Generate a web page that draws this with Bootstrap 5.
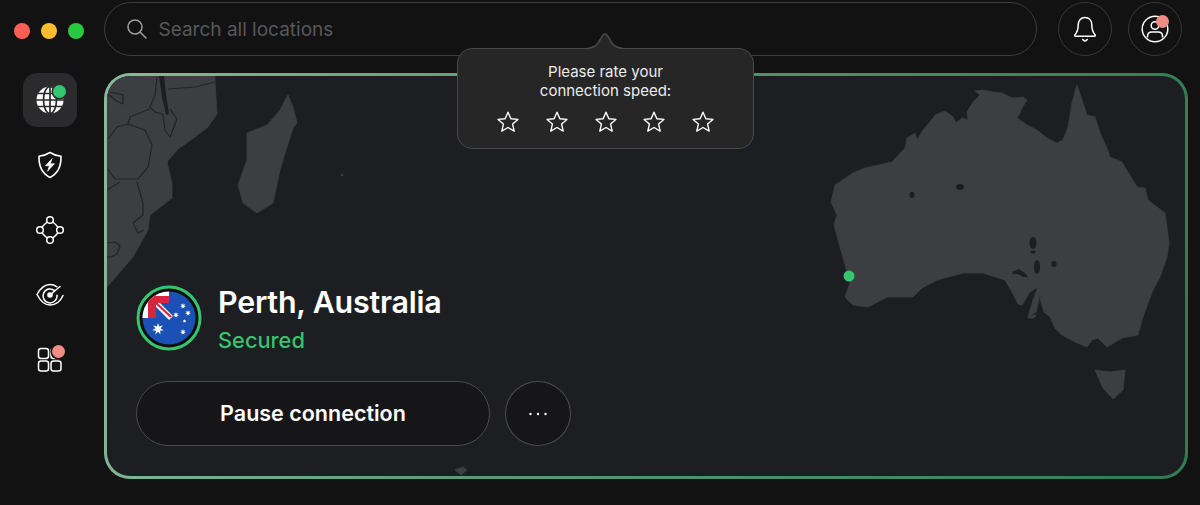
<!DOCTYPE html>
<html lang="en">
<head>
    <meta charset="UTF-8">
    <meta name="viewport" content="width=device-width, initial-scale=1.0">
    <title>VPN - Perth, Australia</title>
    <link href="https://cdn.jsdelivr.net/npm/bootstrap@5.3.0/dist/css/bootstrap.min.css" rel="stylesheet">
    <script src="https://cdn.jsdelivr.net/npm/bootstrap@5.3.0/dist/js/bootstrap.bundle.min.js"></script>
    <style>
        html, body { height: 505px; overflow: hidden; }
        body { background: #121213; font-family: Inter, "Liberation Sans", sans-serif; color: #fff; position: relative; }
        .top-row { height: 56px; padding-top: 2px; }
        .lights { width: 104px; padding-left: 14px; padding-top: 4px; gap: 11px; }
        .light { width: 16px; height: 16px; border-radius: 50%; }
        .search-box { width: 933px; height: 54px; border: 1.5px solid #3c3c3d; border-radius: 27px; padding-left: 20px; gap: 9.5px; }
        .search-text { font-size: 19px; color: #585859; padding-top: 3px; }
        .round-btn { width: 54px; height: 54px; border: 1.5px solid #38383a; border-radius: 50%; position: relative; }
        .bell-btn { margin-left: 21px; }
        .user-btn { margin-left: 16px; }
        .main-row { margin-top: 17px; }
        .side-rail { width: 104px; padding-left: 23px; gap: 11px; }
        .rail-item { width: 54px; height: 54px; border-radius: 14px; position: relative; }
        .rail-active { background: #2b2b2d; }
        .pip { position: absolute; width: 13px; height: 13px; border-radius: 50%; }
        .pip-green { background: #35c46f; top: 12px; right: 12px; }
        .pip-rose { background: #f28b82; top: 12px; right: 12px; }
        .map-panel { width: 1084px; height: 406px; border: 3px solid transparent; border-radius: 26px; position: relative; overflow: hidden;
            background: linear-gradient(#1d1e21, #1d1e21) padding-box, linear-gradient(100deg, #86bb9b 0%, #5f9c78 35%, #2f7d52 100%) border-box;
            padding: 0 0 30px 29px; }
        .map-art { position: absolute; left: -2px; top: -2px; width: 1082px; height: 405px; }
        .map-pin { position: absolute; left: 736px; top: 194px; }
        .place-row { position: relative; gap: 16px; margin-bottom: 27px; }
        .place-text { padding-top: 2px; }
        .place-name { font-size: 30.4px; font-weight: 600; line-height: 36px; letter-spacing: -0.2px; }
        .place-state { font-size: 21.8px; font-weight: 500; color: #35c46f; line-height: 28px; margin-top: 6px; }
        .action-row { position: relative; gap: 15px; }
        .btn.pause-btn { width: 354px; height: 65px; border-radius: 33px; background: #161618; border: 1.5px solid #4c4c4e; color: #fff; font-size: 21.5px; font-weight: 600; }
        .btn.more-btn { width: 66px; height: 65px; border-radius: 50%; background: #161618; border: 1.5px solid #4c4c4e; color: #fff; padding: 0; }
        .rate-pop { position: absolute; left: 457px; top: 48px; width: 297px; height: 101px; background: #262626; border: 1.5px solid #494949; border-radius: 15px; z-index: 5; text-align: center; padding-top: 13px; }
        .rate-tip { position: absolute; left: 129px; top: -18px; width: 36px; height: 19px; }
        .rate-text { font-size: 15px; line-height: 19px; color: #ececec; }
        .rate-stars { gap: 24.7px; margin-top: 10px; }
    </style>
</head>
<body>
    <svg width="0" height="0" class="d-block">
        <defs>
            <polygon id="aus-star" points="0,-1 .195,-.405 .78,-.62 .44,-.1 .97,.22 .35,.28 .43,.9 0,.45 -.43,.9 -.35,.28 -.97,.22 -.44,-.1 -.78,-.62 -.195,-.405"/>
            <path id="rate-star" d="M12 2.200l2.900 6.500 7 .7-5.300 4.700 1.600 7-6.200-3.600-6.200 3.600 1.600-7L2.100 9.400l7-.7z" fill="none" stroke="#fff" stroke-width="1.400" stroke-linejoin="round"/>
        </defs>
    </svg>

    <div class="d-flex top-row">
        <div class="d-flex align-items-center lights">
            <span class="light" style="background:#ff5f57"></span>
            <span class="light" style="background:#febc2e"></span>
            <span class="light" style="background:#28c840"></span>
        </div>
        <div class="d-flex align-items-center search-box">
            <svg width="24" height="24" viewBox="0 0 24 24" fill="none" stroke="#a0a0a0" stroke-width="1.500" stroke-linecap="round"><circle cx="10" cy="10" r="7"/><path d="M15.200 15.200L21 21"/></svg>
            <span class="search-text">Search all locations</span>
        </div>
        <div class="round-btn bell-btn d-flex align-items-center justify-content-center">
            <svg width="26" height="28" viewBox="0 0 26 28" fill="none" stroke="#fff" stroke-width="1.500" stroke-linejoin="round" stroke-linecap="round"><path d="M13 2.500c-4.400 0-6.800 3.300-6.800 7.400 0 5.200-1 7.300-3.400 10 -.4.600-.1 1.300.7 1.300h19c.8 0 1.100-.7.7-1.300-2.400-2.700-3.400-4.800-3.400-10 0-4.100-2.400-7.400-6.800-7.400z"/><path d="M10.800 24.500c.6 1 1.300 1.400 2.200 1.400s1.600-.4 2.200-1.400"/></svg>
        </div>
        <div class="round-btn user-btn d-flex align-items-center justify-content-center">
            <svg width="28" height="28" viewBox="0 0 28 28" fill="none" stroke="#fff" stroke-width="1.500"><circle cx="14" cy="14" r="12.800"/><circle cx="14" cy="10.500" r="3.800"/><path d="M6.500 22.500v-1.500c0-2.500 2-4 4.500-4h6c2.500 0 4.500 1.500 4.500 4v1.500"/></svg>
            <span class="pip pip-rose"></span>
        </div>
    </div>

    <div class="d-flex main-row">
        <div class="d-flex flex-column side-rail">
            <div class="rail-item rail-active d-flex align-items-center justify-content-center">
                <svg width="28" height="28" viewBox="0 0 28 28"><circle cx="14" cy="14" r="13.500" fill="#fff"/><g fill="none" stroke="#2b2b2d" stroke-width="1.700"><ellipse cx="14" cy="14" rx="6.500" ry="13.500"/><path d="M14 0v28M0 14h28M2 7.500h24M2 20.500h24"/></g></svg>
                <span class="pip pip-green" style="top:12px;right:11px;box-shadow:0 0 0 1.500px #2b2b2d"></span>
            </div>
            <div class="rail-item d-flex align-items-center justify-content-center">
                <svg width="26" height="28" viewBox="0 0 26 28" fill="none" stroke="#fff" stroke-width="1.600" stroke-linejoin="round"><path d="M13 1.500c3 2 6.500 3.200 11 3.800.3 9.800-2.700 17-11 21.200C4.700 22.300 1.700 15.100 2 5.300c4.500-.6 8-1.800 11-3.800z"/><path d="M15.200 7.500L8.500 14.800h4l-2 5.500 7-7.600h-4.200z" fill="#fff" stroke-width=".6"/></svg>
            </div>
            <div class="rail-item d-flex align-items-center justify-content-center">
                <svg width="28" height="28" viewBox="0 0 28 28" fill="none" stroke="#fff" stroke-width="1.500"><circle cx="14" cy="4" r="3.300"/><circle cx="14" cy="24" r="3.300"/><circle cx="4" cy="14" r="3.300"/><circle cx="24" cy="14" r="3.300"/><path d="M16.700 6c1.800 1.300 3.800 3.300 5.300 5.300M11.300 6C9.500 7.300 7.500 9.300 6 11.300M16.700 22c1.800-1.300 3.800-3.300 5.300-5.300M11.300 22c-1.800-1.300-3.800-3.300-5.300-5.300"/></svg>
            </div>
            <div class="rail-item d-flex align-items-center justify-content-center">
                <svg width="28" height="24" viewBox="0 0 28 24" fill="none" stroke="#fff" stroke-width="1.500" stroke-linecap="round"><path d="M21 3.800C18.800 2.300 16.600 1.500 14 1.500 8.500 1.500 4 6 1 11.500c3 5.700 7.500 10.500 13 10.500 5.800 0 10.500-3.800 13-9.500"/><path d="M18.600 7.600A7 7 0 1 0 21 12.200"/><circle cx="14" cy="12" r="2.800" fill="#fff" stroke="none"/><path d="M14 12l10-8.500"/></svg>
            </div>
            <div class="rail-item d-flex align-items-center justify-content-center">
                <svg width="26" height="26" viewBox="0 0 26 26" fill="none" stroke="#fff" stroke-width="1.500"><rect x="1.500" y="1.500" width="10" height="10" rx="2.500"/><rect x="14" y="1.500" width="10" height="10" rx="2.500"/><rect x="1.500" y="14" width="10" height="10" rx="2.500"/><rect x="14" y="14" width="10" height="10" rx="2.500"/></svg>
                <span class="pip pip-rose" style="top:12px;right:12px;box-shadow:0 0 0 1.500px #121213"></span>
            </div>
        </div>

        <div class="map-panel d-flex flex-column justify-content-end">
            <svg class="map-art" viewBox="105 74 1082 405">
                <g fill="#3d3e42" stroke="#3d3e42" stroke-width=".8" stroke-linejoin="round">
                    <path d="M105 70H215L215 82 217 114 208 127 195 137 178 149 167 162 172 183 172 198 150 215 148 230 133 257 107 287 105 290z"/>
                    <path d="M288 95L293 107 297 123 293 128 287 147 280 170 273 203 257 213 243 203 238 185 247 160 247 133 267 125 280 110z"/>
                    <path d="M835 185L853 173 865 168 892 162 905 148 907 138 915 133 917 140 923 130 930 122 935 115 945 111 953 117 956 123 962 118 968 120 967 112 973 102 980 95 975 91 983 90 993 92 1002 93 1012 98 1023 97 1027 100 1022 108 1020 113 1017 118 1027 125 1037 130 1047 138 1057 143 1063 140 1068 127 1072 103 1077 85 1082 100 1087 115 1095 117 1100 133 1107 148 1110 157 1122 162 1128 172 1137 187 1145 188 1148 200 1165 213 1167 227 1169 243 1167 257 1160 277 1153 290 1148 303 1142 320 1138 335 1122 338 1107 347 1098 338 1092 340 1087 347 1075 342 1062 335 1055 328 1050 317 1044 312 1041 302 1040 295 1036 312 1028 317 1033 300 1038 287 1030 292 1022 305 1018 304 1012 292 1005 280 983 273 963 273 937 280 922 288 913 297 887 297 868 307 853 305 845 297 850 283 840 247 834 225 837 215 831 202z"/>
                    <path d="M1095 370L1110 372 1125 370 1123 390 1113 399 1103 388z"/>
                    <path d="M1028 316l8-1-2 3-6 0zM455 470l8-3 4 3-6 5z"/>
                    <circle cx="342" cy="175" r="1"/>
                </g>
                <g fill="#1d1e21">
                    <ellipse cx="912" cy="195" rx="2.500" ry="3"/>
                    <ellipse cx="960" cy="187" rx="4" ry="3"/>
                    <ellipse cx="1033" cy="243" rx="3.500" ry="6"/>
                    <ellipse cx="1033" cy="252" rx="2.500" ry="1.500"/>
                    <ellipse cx="1037" cy="267" rx="3" ry="7"/>
                    <ellipse cx="1054" cy="264" rx="2.500" ry="3"/>
                    <path d="M1012 272l7-3 6 4 3 4-5 0-5-3-5 0z"/>
                </g>
                <g fill="none" stroke="#232427" stroke-width="1.200" stroke-linejoin="round">
                    <path d="M110 92l13 3 0 9-8-4-7-6"/>
                    <path d="M215 82l-20 5-27 2"/>
                    <path d="M157 77l-2 18-5 12 5 5 8 2"/>
                    <path d="M150 109l-20 8-2 7 17 6 7 15-4 22-10 12-23 0-7-10"/>
                    <path d="M128 124l-11 3-9 12"/>
                    <path d="M107 190l13-8M137 182l6 21 0 12-10 8 5 10 6-3"/>
                    <path d="M163 114l2 16 5 7 7-18-7-10"/>
                    <path d="M108 243l7-1 5 4-3 8-6 3-4 0"/>
                </g>
                <path d="M159 76h5l2 18 3 20-3 1-4-18z" fill="#1d1e21"/>
            </svg>
            <svg class="map-pin" width="12" height="12" viewBox="0 0 12 12"><circle cx="6" cy="6" r="5.500" fill="#35c46f"/></svg>

            <div class="d-flex align-items-center place-row">
                <svg width="66" height="66" viewBox="0 0 66 66">
                    <defs><clipPath id="flag-clip"><circle cx="33" cy="33" r="26.500"/></clipPath></defs>
                    <circle cx="33" cy="33" r="31" fill="#0f0f10" stroke="#35c46f" stroke-width="3"/>
                    <g clip-path="url(#flag-clip)">
                        <rect width="66" height="66" fill="#1b50b4"/>
                        <rect x="4" y="4" width="29" height="29" fill="#fff"/>
                        <rect x="20" y="18" width="13" height="15" fill="#1b50b4"/>
                        <path d="M19 17L35 33" stroke="#fff" stroke-width="5.500"/>
                        <path d="M19 17L35 32" stroke="#d8243c" stroke-width="2.200"/>
                        <path d="M4 11H33V18H4zM12 4H20V33H12z" fill="#d8243c"/>
                    </g>
                    <g fill="#fff">
                        <use href="#aus-star" transform="translate(22 44) scale(6)"/>
                        <use href="#aus-star" transform="translate(47 21) scale(3)"/>
                        <use href="#aus-star" transform="translate(40 30) scale(3)"/>
                        <use href="#aus-star" transform="translate(52 28) scale(3)"/>
                        <use href="#aus-star" transform="translate(48.500 36) scale(2)"/>
                        <use href="#aus-star" transform="translate(47 47) scale(3)"/>
                    </g>
                </svg>
                <div class="place-text">
                    <div class="place-name">Perth, Australia</div>
                    <div class="place-state">Secured</div>
                </div>
            </div>

            <div class="d-flex action-row">
                <button type="button" class="btn pause-btn">Pause connection</button>
                <button type="button" class="btn more-btn d-flex align-items-center justify-content-center">
                    <svg width="20" height="4" viewBox="0 0 20 4" fill="#fff"><circle cx="2.500" cy="2" r="1.200"/><circle cx="10" cy="2" r="1.200"/><circle cx="17.500" cy="2" r="1.200"/></svg>
                </button>
            </div>
        </div>
    </div>

    <div class="rate-pop">
        <svg class="rate-tip" viewBox="0 0 36 19"><path d="M0 17.500C6 17 9 15 11 12L16 4C17 2.500 19 2.500 20 4L25 12C27 15 30 17 36 17.500V19H0z" fill="#262626"/><path d="M0 17.500C6 17 9 15 11 12L16 4C17 2.500 19 2.500 20 4L25 12C27 15 30 17 36 17.500" fill="none" stroke="#494949" stroke-width="1.500"/></svg>
        <div class="rate-text">Please rate your<br>connection speed:</div>
        <div class="d-flex justify-content-center rate-stars">
            <svg width="24" height="24" viewBox="0 0 24 24"><use href="#rate-star"/></svg>
            <svg width="24" height="24" viewBox="0 0 24 24"><use href="#rate-star"/></svg>
            <svg width="24" height="24" viewBox="0 0 24 24"><use href="#rate-star"/></svg>
            <svg width="24" height="24" viewBox="0 0 24 24"><use href="#rate-star"/></svg>
            <svg width="24" height="24" viewBox="0 0 24 24"><use href="#rate-star"/></svg>
        </div>
    </div>
</body>
</html>
